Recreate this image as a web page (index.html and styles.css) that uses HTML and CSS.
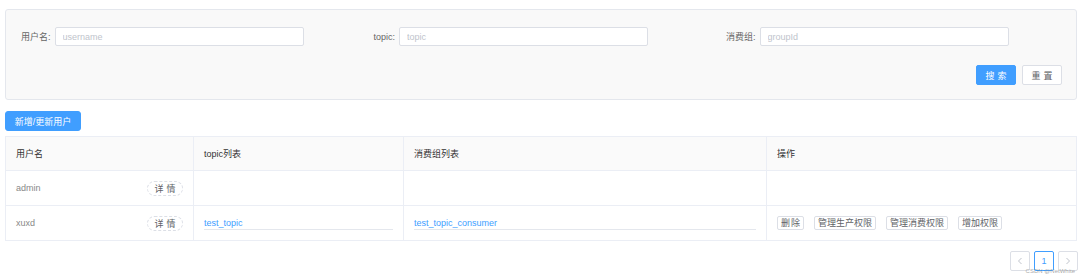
FILE: index.html
```html
<!DOCTYPE html>
<html lang="zh-CN">
<head>
  <meta charset="UTF-8">
  <meta name="viewport" content="width=device-width, initial-scale=1.0">
  <title>用户管理</title>
  <link rel="stylesheet" href="styles.css">
</head>
<body>

<div class="page">
  <div class="search-panel">
    <div class="search-row">
      <div class="field">
        <label>用户名:</label>
        <input class="input" type="text" placeholder="username">
      </div>
      <div class="field">
        <label>topic:</label>
        <input class="input" type="text" placeholder="topic">
      </div>
      <div class="field">
        <label>消费组:</label>
        <input class="input" type="text" placeholder="groupId">
      </div>
    </div>
    <div class="search-actions">
      <button class="btn btn-primary btn-spaced">搜索</button>
      <button class="btn btn-spaced">重置</button>
    </div>
  </div>

  <button class="btn btn-primary btn-add">新增/更新用户</button>

  <table class="user-table">
    <colgroup>
      <col style="width: 188px">
      <col style="width: 210px">
      <col style="width: 363px">
      <col>
    </colgroup>
    <thead>
      <tr>
        <th>用户名</th>
        <th>topic列表</th>
        <th>消费组列表</th>
        <th>操作</th>
      </tr>
    </thead>
    <tbody>
      <tr>
        <td>
          <div class="user-cell">
            <span>admin</span>
            <button class="pill">详情</button>
          </div>
        </td>
        <td></td>
        <td></td>
        <td></td>
      </tr>
      <tr>
        <td>
          <div class="user-cell">
            <span>xuxd</span>
            <button class="pill">详情</button>
          </div>
        </td>
        <td><div class="list-item"><a href="#">test_topic</a></div></td>
        <td><div class="list-item"><a href="#">test_topic_consumer</a></div></td>
        <td>
          <div class="ops">
            <button class="op op-del">删除</button>
            <button class="op">管理生产权限</button>
            <button class="op">管理消费权限</button>
            <button class="op">增加权限</button>
          </div>
        </td>
      </tr>
    </tbody>
  </table>

  <div class="pager">
    <button class="page-btn">
      <svg width="8" height="8" viewBox="0 0 8 8"><path d="M5.5 1 L2.5 4 L5.5 7" fill="none" stroke="#c0c4cc" stroke-width="1"/></svg>
    </button>
    <button class="page-btn active">1</button>
    <button class="page-btn">
      <svg width="8" height="8" viewBox="0 0 8 8"><path d="M2.5 1 L5.5 4 L2.5 7" fill="none" stroke="#c0c4cc" stroke-width="1"/></svg>
    </button>
  </div>

  <div class="watermark">CSDN @NetWhite</div>
</div>

</body>
</html>
```

FILE: styles.css
```css
body {
  margin: 0;
  font-family: 'Liberation Sans', 'Noto Sans CJK SC', sans-serif;
  font-size: 9px;
  color: #606266;
  background: #fff;
}

.page {
  position: relative;
  padding: 9px 3px 0 5px;
  height: 270px;
}

.search-panel {
  background: #f9f9f9;
  border: 1px solid #e4e7ed;
  border-radius: 3px;
  padding: 17px 14px 14px 15px;
}

.search-row {
  display: grid;
  grid-template-columns: repeat(3, 352.5px);
}

.field {
  display: flex;
  align-items: center;
  gap: 4px;
}

.field label {
  color: #666;
  white-space: nowrap;
}

.input {
  width: 249px;
  height: 19px;
  box-sizing: border-box;
  border: 1px solid #dcdfe6;
  border-radius: 2px;
  padding: 0 7px;
  font-family: inherit;
  font-size: 9px;
  color: #606266;
  background: #fff;
  outline: none;
}

.input::placeholder {
  color: #c0c4cc;
}

.search-actions {
  display: flex;
  justify-content: flex-end;
  gap: 6px;
  margin-top: 19px;
}

.btn {
  height: 20px;
  box-sizing: border-box;
  border: 1px solid #dcdfe6;
  border-radius: 2px;
  background: #fff;
  color: #606266;
  font-family: inherit;
  font-size: 9px;
  padding: 0 10px;
  cursor: pointer;
}

.btn-spaced {
  width: 40px;
  padding: 0;
  letter-spacing: 3px;
  text-indent: 3px;
}

.btn-primary {
  background: #409eff;
  border-color: #409eff;
  color: #fff;
}

.btn-add {
  display: block;
  margin-top: 11px;
  width: 76px;
  padding: 0;
  border-radius: 3px;
}

.user-table {
  margin-top: 5px;
  width: 100%;
  border-collapse: collapse;
  table-layout: fixed;
  border: 1px solid #ebeef5;
}

.user-table th,
.user-table td {
  border: 1px solid #ebeef5;
  padding: 0 10px;
  text-align: left;
}

.user-table th {
  height: 33px;
  background: #fafafa;
  color: #333;
  font-weight: normal;
}

.user-table td {
  height: 34px;
  color: #888;
}

.user-cell {
  display: flex;
  align-items: center;
  justify-content: space-between;
}

.pill {
  width: 36px;
  height: 15px;
  padding: 0;
  border: 1px dashed #dcdfe6;
  border-radius: 8px;
  background: #fff;
  color: #606266;
  font-family: inherit;
  font-size: 9px;
  letter-spacing: 3px;
  text-indent: 3px;
}

.list-item {
  line-height: 12px;
  border-bottom: 1px solid #e4e7ed;
  padding-top: 1px;
}

.list-item a {
  color: #409eff;
  text-decoration: none;
}

.ops {
  display: flex;
  gap: 10px;
}

.op {
  height: 14px;
  padding: 0 3px;
  border: 1px solid #dcdfe6;
  border-radius: 2px;
  background: #fff;
  color: #606266;
  font-family: inherit;
  font-size: 9px;
  line-height: 12px;
}

.op-del {
  letter-spacing: 1px;
  padding: 0 2px 0 3px;
}

.pager {
  display: flex;
  justify-content: flex-end;
  gap: 4px;
  margin-top: 10px;
  margin-right: -1px;
}

.page-btn {
  width: 20px;
  height: 20px;
  padding: 0;
  border: 1px solid #dcdfe6;
  border-radius: 2px;
  background: #fff;
  color: #606266;
  font-family: inherit;
  font-size: 9px;
  display: flex;
  align-items: center;
  justify-content: center;
}

.page-btn.active {
  border-color: #409eff;
  color: #409eff;
}

.watermark {
  position: absolute;
  right: 5px;
  top: 268px;
  font-size: 6px;
  color: rgba(140, 140, 140, 0.75);
}
```
